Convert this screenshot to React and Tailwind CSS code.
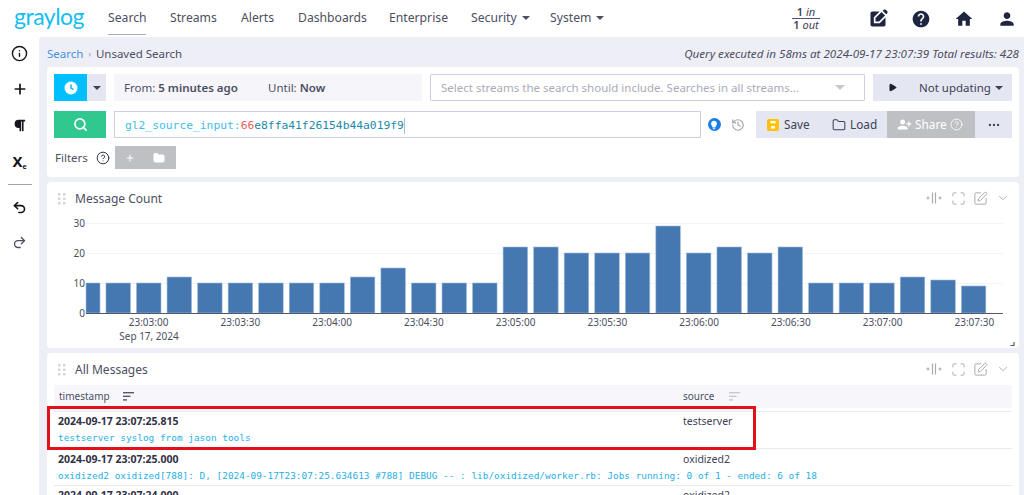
import React from "react";
import { Search, History, Folder, Ellipsis, Play, ChevronDown, Maximize, SquarePen, Undo2, Redo2, Plus, Info, CircleHelp } from "lucide-react";
import { MdHelp, MdHome, MdPerson, MdEditSquare, MdPersonAdd, MdLightbulb } from "react-icons/md";
import { FaParagraph } from "react-icons/fa";

const sans = "font-['Noto_Sans',sans-serif]";
const mono = "font-['DejaVu_Sans_Mono',monospace]";

const navItems = [
  { text: "Search", w: "w-[38px]", active: true },
  { text: "Streams", w: "w-[47px]" },
  { text: "Alerts", w: "w-[33px]" },
  { text: "Dashboards", w: "w-[67px]" },
  { text: "Enterprise", w: "w-[58px]" },
  { text: "Security", w: "w-[55px]", caret: true },
  { text: "System", w: "w-[50px]", caret: true },
];

const barValues = [10, 10, 10, 12, 10, 10, 10, 10, 10, 12, 15, 10, 10, 10, 22, 22, 20, 20, 20, 29, 20, 22, 20, 22, 10, 10, 10, 12, 11, 9];
const tickLabels = ["23:03:00", "23:03:30", "23:04:00", "23:04:30", "23:05:00", "23:05:30", "23:06:00", "23:06:30", "23:07:00", "23:07:30"];

const Caret = ({ className = "" }) => (
  <span className={`inline-block w-0 h-0 border-x-[4px] border-x-transparent border-t-[4px] border-t-current ${className}`} />
);

const Grip = () => (
  <svg width="8" height="12" viewBox="0 0 8 12" className="text-[#d3d5dc]" fill="currentColor">
    {[0, 4.5, 9].map((y) => (
      <g key={y}>
        <rect x="0" y={y} width="2.5" height="2.5" />
        <rect x="5" y={y} width="2.5" height="2.5" />
      </g>
    ))}
  </svg>
);

const SortIcon = ({ className = "" }) => (
  <svg width="11" height="9" viewBox="0 0 11 9" className={className} fill="currentColor">
    <rect x="0" y="0" width="11" height="1.4" />
    <rect x="0" y="3.6" width="7.5" height="1.4" />
    <rect x="0" y="7.2" width="4" height="1.4" />
  </svg>
);

const ClockIcon = () => (
  <svg width="14" height="14" viewBox="0 0 14 14">
    <circle cx="7" cy="7" r="6.5" fill="white" />
    <path d="M7 3.5V7l2.4 1.6" fill="none" stroke="#00bfff" strokeWidth="1.5" />
  </svg>
);

const SaveIcon = () => (
  <svg width="12" height="12" viewBox="0 0 12 12">
    <rect width="12" height="12" rx="2" fill="#ffc107" />
    <rect x="3.5" y="2" width="5" height="2.4" fill="white" />
    <rect x="4" y="7" width="4" height="2.6" fill="white" />
  </svg>
);

const WidgetActions = () => (
  <div className="flex items-center text-[#a9abb3] -mt-[2px]">
    <svg width="16" height="12" viewBox="0 0 16 12" fill="none" stroke="currentColor" strokeWidth="1.2">
      <path d="M6.5 0.5v11M9.5 0.5v11M0.5 6h3M2 4.5v3M12.5 6h3M14 4.5v3" />
    </svg>
    <Maximize size={15} strokeWidth={1.6} className="ml-[9px]" />
    <SquarePen size={15} strokeWidth={1.6} className="ml-[7px]" />
    <ChevronDown size={14} strokeWidth={1.6} className="ml-[8px]" />
  </div>
);

const WidgetHeader = ({ title }) => (
  <div className="flex items-center h-[24px] pl-[11px] pr-[9px]">
    <Grip />
    <span className="ml-[9px] text-[12px] text-[#4c4f62]">{title}</span>
    <div className="flex-1" />
    <WidgetActions />
  </div>
);

const Chart = () => (
  <svg width="972" height="137" viewBox="47 211 972 137" className="block">
    {[223, 253, 283].map((y) => (
      <line key={y} x1="86" x2="1003" y1={y + 0.5} y2={y + 0.5} stroke="#f4f4f6" />
    ))}
    {barValues.map((v, i) => {
      const left = 75.4 + i * 30.55;
      const x = i === 0 ? 86 : left;
      const w = i === 0 ? 14 : 24.5;
      return <rect key={i} x={x} y={313 - v * 3} width={w} height={v * 3} fill="#4577b1" stroke="#9dbbdc" strokeWidth="0.6" />;
    })}
    <line x1="86" x2="1003" y1="313.5" y2="313.5" stroke="#55586a" />
    {[[30, 227], [20, 257], [10, 287], [0, 317]].map(([label, y]) => (
      <text key={label} x="85" y={y} textAnchor="end" fontSize="10" fontFamily="Noto Sans" fill="#4c4f62">{label}</text>
    ))}
    {tickLabels.map((t, i) => (
      <text key={t} x={148.6 + i * 91.75} y="326" textAnchor="middle" fontSize="10" fontFamily="Noto Sans" fill="#4c4f62">{t}</text>
    ))}
    <text x="149" y="340" textAnchor="middle" fontSize="10" fontFamily="Noto Sans" fill="#4c4f62">Sep 17, 2024</text>
    <path d="M1014 342v3.5h-3.5" fill="none" stroke="#55586a" strokeWidth="1.2" />
  </svg>
);

const MessageRow = ({ time, source, text, className = "" }) => (
  <div className={`border-t border-[#e9eaee] pl-[4px] pr-[3px] ${className}`}>
    <div className="flex h-[19px] items-center">
      <span className="w-[625px] text-[10.5px] font-bold text-[#2f3245]">{time}</span>
      <span className="text-[10.5px] text-[#3f4255]">{source}</span>
    </div>
    <div className={`${mono} text-[9.42px] leading-[14px] text-[#1fb0e6] whitespace-nowrap`}>{text}</div>
  </div>
);

const App = () => {
  return (
    <div className={`${sans} w-[1024px] h-[495px] overflow-hidden bg-white flex flex-col text-[#4c4f62]`}>
      {/* Top nav */}
      <header className="h-[37px] shrink-0 flex items-center">
        <div className="w-[108px] pl-[14px] text-[23px] leading-[37px] tracking-[-0.5px] text-[#15bdf2] font-['Lato',sans-serif] -mt-[4px]">graylog</div>
        <nav className="flex gap-[24px]">
          {navItems.map((item) => (
            <div key={item.text} className={`relative ${item.w} text-[12.2px] whitespace-nowrap flex items-center gap-[5px] text-[#4c4f62]`}>
              {item.text}
              {item.caret && <Caret />}
              {item.active && <div className="absolute left-0 right-0 -bottom-[7px] h-[1px] bg-[#a9abb3]" />}
            </div>
          ))}
        </nav>
        <div className="ml-[192px] w-[28px] flex flex-col items-center text-[11px] leading-[12px] text-[#3f4255]">
          <span className="border-b border-[#55507a] w-full text-center"><b className="font-semibold">1</b> <i>in</i></span>
          <span className="whitespace-nowrap"><b className="font-semibold">1</b> <i>out</i></span>
        </div>
        <div className="ml-[48px] flex items-center gap-[23px] text-[#1e2540]">
          <MdEditSquare size={20} />
          <MdHelp size={20} />
          <MdHome size={20} />
          <MdPerson size={20} />
        </div>
      </header>

      <div className="flex flex-1 min-h-0">
        {/* Left rail */}
        <aside className="w-[39px] shrink-0 flex flex-col items-center pt-[8px] text-[#15151f]">
          <Info size={17} strokeWidth={2} />
          <Plus size={16} strokeWidth={2.6} className="mt-[19px]" />
          <FaParagraph size={13} className="mt-[22px]" />
          <span className="mt-[19px] text-[15px] leading-[20px] font-bold">X<sub className="text-[7px]">e</sub></span>
          <div className="mt-[13px] w-[24px] h-[1px] bg-[#a4a5ab]" />
          <Undo2 size={15} strokeWidth={2.6} className="mt-[15px]" />
          <Redo2 size={15} strokeWidth={2.2} className="mt-[20px] text-[#4c4f62]" />
        </aside>

        {/* Main column */}
        <main className="flex-1 bg-[#eeeef7] rounded-tl-[3px] pl-[8px] pr-[5px] flex flex-col gap-[5px] min-w-0">
          <div className="h-[25px] pt-[9px] shrink-0 flex items-center justify-between">
            <div className="flex items-center text-[11.5px]">
              <span className="text-[#4a90e2]">Search</span>
              <span className="mx-[5px] text-[8px] text-[#8a8d9a]">›</span>
              <span>Unsaved Search</span>
            </div>
            <i className="text-[11.6px] text-[#4c4f62]">Query executed in 58ms at 2024-09-17 23:07:39 Total results: 428</i>
          </div>

          {/* Search card */}
          <section className="relative shrink-0 h-[110px] bg-white rounded-[4px] px-[7px] pt-[7px]">
            <div className="flex h-[27px]">
              <div className="w-[33px] bg-[#00bfff] flex items-center justify-center"><ClockIcon /></div>
              <div className="w-[19px] bg-[#e4e6f1] flex items-center justify-center text-[#3f4255]"><Caret /></div>
              <div className="ml-[8px] w-[308px] bg-[#f5f5fa] flex items-center pl-[10px] text-[11.5px]">
                <span className="w-[144px]">From: <b className="font-semibold">5 minutes ago</b></span>
                <span>Until: <b className="font-semibold">Now</b></span>
              </div>
              <div className="ml-[8px] w-[435px] border border-[#ccd0e4] rounded-[1px] flex items-center pl-[10px] pr-[20px] text-[11.5px] text-[#a9abb5] whitespace-nowrap">
                <span className="flex-1 overflow-hidden">Select streams the search should include. Searches in all streams…</span>
                <Caret className="scale-x-125 text-[#c3c7d8] border-t-[5px]" />
              </div>
              <div className="ml-[8px] w-[139px] bg-[#e4e6f1] flex items-center pl-[15px] text-[11.5px] text-[#3f4255]">
                <Play size={9} fill="#1e2030" className="text-[#1e2030]" />
                <span className="ml-[22px] mr-[4px] whitespace-nowrap">Not updating</span>
                <Caret />
              </div>
            </div>
            <div className="flex h-[27px] mt-[10px]">
              <div className="w-[52px] bg-[#30c88e] flex items-center justify-center text-white"><Search size={15} strokeWidth={2.6} /></div>
              <div className={`ml-[8px] w-[587px] border border-[#ccd0e4] flex items-center pl-[10px] pt-[3px] text-[11.3px] ${mono} whitespace-nowrap`}>
                <span className="text-[#3dbde8]">gl2_source_input:</span>
                <span className="text-[#ee5a5a]">66</span>
                <span className="text-[#1a8aa8] border-r border-[#b8bcc8]">e8ffa41f26154b44a019f9</span>
              </div>
              <div className="ml-[6px] w-[14px] flex items-center justify-center">
                <div className="w-[13px] h-[13px] rounded-full bg-[#1a7de8] flex items-center justify-center text-white"><MdLightbulb size={10} /></div>
              </div>
              <div className="ml-[10px] w-[14px] flex items-center justify-center text-[#a4a6ae]"><History size={14} strokeWidth={2} /></div>
              <div className="ml-[11px] flex-1 flex bg-[#e4e6f1] text-[11.8px] text-[#3f4255]">
                <div className="w-[65px] flex items-center pl-[11px] gap-[5px] whitespace-nowrap"><SaveIcon /> Save</div>
                <div className="w-[66px] flex items-center pl-[11px] gap-[4px] whitespace-nowrap"><Folder size={14} strokeWidth={1.8} /> Load</div>
                <div className="w-[88px] bg-[#bfc0c3] text-white flex items-center pl-[10px] gap-[3px] whitespace-nowrap"><MdPersonAdd size={15} className="-scale-x-100" /> Share <CircleHelp size={13} strokeWidth={1.6} /></div>
                <div className="flex-1 flex items-center justify-center"><Ellipsis size={14} /></div>
              </div>
            </div>
            <div className="flex items-center mt-[8px] h-[23px] text-[11.5px]">
              <span className="ml-[1px]">Filters</span>
              <CircleHelp size={14} strokeWidth={1.7} className="ml-[8px] text-[#2f3245]" />
              <div className="ml-[5px] w-[61px] h-[23px] bg-[#bfc0c3] flex items-center text-white">
                <Plus size={10} strokeWidth={2.5} className="ml-[10px]" />
                <Folder size={12} fill="white" className="ml-[18px]" />
              </div>
            </div>
          </section>

          {/* Message count */}
          <section className="shrink-0 h-[166px] bg-white rounded-[4px] pt-[5px] overflow-hidden">
            <WidgetHeader title="Message Count" />
            <Chart />
          </section>

          {/* All messages */}
          <section className="relative flex-1 min-h-0 bg-white rounded-t-[4px] pt-[5px] overflow-hidden">
            <WidgetHeader title="All Messages" />
            <div className="mx-[7px] mt-[3px]">
              <div className="flex items-center h-[23px] bg-[#f7f7fb] pl-[5px] text-[10px] text-[#4c4f62] mb-[3px]">
                <span className="w-[50px]">timestamp</span>
                <SortIcon className="ml-[14px] text-[#55586a]" />
                <span className="ml-[549px] w-[36px]">source</span>
                <SortIcon className="ml-[10px] text-[#c7c9d0]" />
              </div>
              <MessageRow time="2024-09-17 23:07:25.815" source="testserver" text="testserver syslog from jason tools" className="h-[37px]" />
              <MessageRow time="2024-09-17 23:07:25.000" source="oxidized2" text="oxidized2 oxidized[788]: D, [2024-09-17T23:07:25.634613 #788] DEBUG -- : lib/oxidized/worker.rb: Jobs running: 0 of 1 - ended: 6 of 18" className="h-[37px] pt-[1px]" />
              <MessageRow time="2024-09-17 23:07:24.000" source="oxidized2" text="" />
            </div>
            <div className="absolute left-0 top-[53px] w-[709px] h-[44px] border-[3px] border-[#e3101a]" />
          </section>
        </main>
      </div>
    </div>
  );
};

export default App;
